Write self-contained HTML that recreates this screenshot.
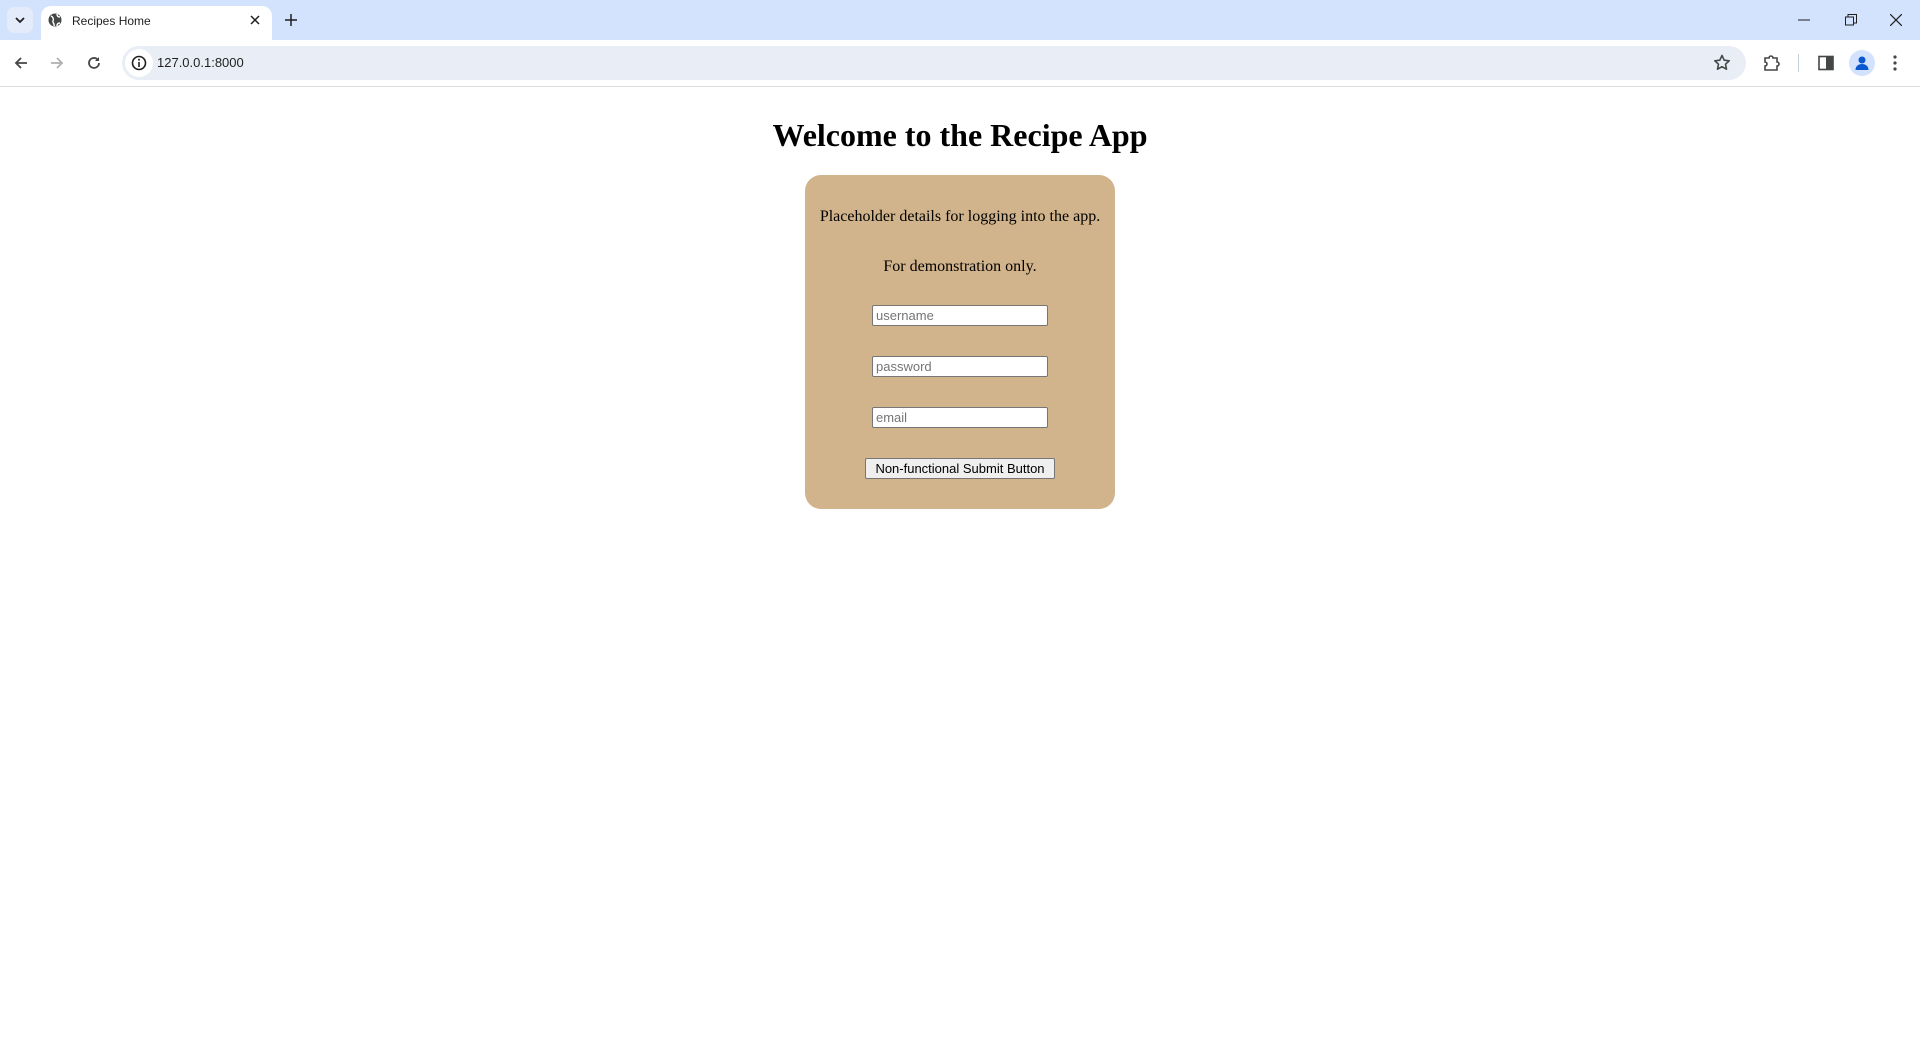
<!DOCTYPE html>
<html><head><meta charset="utf-8"><style>
*{box-sizing:border-box;margin:0;padding:0}
body{width:1920px;height:1040px;background:#fff;position:relative;overflow:hidden;font-family:"Liberation Sans",sans-serif}
.abs{position:absolute}
#tabbar{left:0;top:0;width:1920px;height:40px;background:#d3e3fd}
#tab{left:41px;top:6px;width:231px;height:34px;background:#fff;border-radius:10px 10px 0 0}
#toolbar{left:0;top:40px;width:1920px;height:46px;background:#fff;border-radius:0}
#omni{left:122px;top:46px;width:1624px;height:34px;background:#e9eef6;border-radius:17px}
#sep{left:0;top:86px;width:1920px;height:1px;background:#dadce0}
.txt{font-size:12px;color:#1f1f1f}
h1{position:absolute;left:0;width:1920px;top:117px;text-align:center;font:bold 32px "Liberation Serif",serif;color:#000}
#card{left:805px;top:175px;width:310px;height:334px;background:#d2b48c;border-radius:16px}
.p{position:absolute;left:805px;width:310px;text-align:center;font:16px "Liberation Serif",serif;color:#000}
.in{position:absolute;left:872px;width:176px;height:21px;background:#fff;border:1px solid #767676;border-radius:2px;font:13px "Liberation Sans",sans-serif;color:#757575;padding:2px 3px;line-height:15px}
#btn{left:865px;top:458px;width:190px;height:21px;background:#efefef;border:1px solid #767676;border-radius:2px;font:13px "Liberation Sans",sans-serif;color:#000;text-align:center;line-height:19px}
</style></head><body>
<div id="tabbar" class="abs"></div>
<div class="abs" style="left:7px;top:7px;width:26px;height:26px;border-radius:7px;background:#e4ecfb"></div>
<svg class="abs" style="left:13px;top:13px" width="14" height="14"><path d="M3 5l4 4 4-4" stroke="#1f1f1f" stroke-width="1.8" fill="none"/></svg>
<div id="tab" class="abs"></div>
<svg class="abs" style="left:48px;top:13px" width="14" height="14"><circle cx="7" cy="7" r="6.5" fill="#444746"/><path d="M3 3c2 1 3 3 2 5s2 2 1 5M9 1c0 2 1 3 3 3M12 10c-2 0-3 1-3 3" stroke="#fff" stroke-width="1.4" fill="none"/></svg>
<div class="abs txt" style="left:72px;top:14px">Recipes Home</div>
<svg class="abs" style="left:250px;top:15px" width="10" height="10"><path d="M1 1l8 8M9 1l-8 8" stroke="#1f1f1f" stroke-width="1.5"/></svg>
<svg class="abs" style="left:285px;top:14px" width="12" height="12"><path d="M6 0v12M0 6h12" stroke="#1f1f1f" stroke-width="1.5"/></svg>
<svg class="abs" style="left:1798px;top:19px" width="12" height="2"><path d="M0 1h12" stroke="#1f1f1f"/></svg>
<svg class="abs" style="left:1845px;top:14px" width="12" height="12"><rect x="0.5" y="3" width="8" height="8" fill="none" stroke="#1f1f1f"/><path d="M3 3V0.5h8.5V9H9" fill="none" stroke="#1f1f1f"/></svg>
<svg class="abs" style="left:1890px;top:14px" width="12" height="12"><path d="M0 0l12 12M12 0L0 12" stroke="#1f1f1f" stroke-width="1.2"/></svg>
<div id="toolbar" class="abs"></div>
<svg class="abs" style="left:14px;top:56px" width="14" height="14"><path d="M13 7H2M7 2L2 7l5 5" stroke="#444746" stroke-width="1.8" fill="none"/></svg>
<svg class="abs" style="left:50px;top:56px" width="14" height="14"><path d="M1 7h11M7 2l5 5-5 5" stroke="#b0b0b0" stroke-width="1.8" fill="none"/></svg>
<svg class="abs" style="left:87px;top:56px" width="14" height="14"><path d="M12 7a5 5 0 1 1-1.6-3.7" stroke="#444746" stroke-width="1.8" fill="none"/><path d="M12 1v4H8z" fill="#444746"/></svg>
<div id="omni" class="abs"></div>
<div class="abs" style="left:125px;top:49px;width:28px;height:28px;border-radius:14px;background:#fff"></div>
<svg class="abs" style="left:131px;top:55px" width="16" height="16"><circle cx="8" cy="8" r="6.5" fill="none" stroke="#1f1f1f" stroke-width="1.6"/><path d="M8 7v5" stroke="#1f1f1f" stroke-width="1.6"/><circle cx="8" cy="4.8" r="1" fill="#1f1f1f"/></svg>
<div class="abs" style="left:157px;top:55px;font-size:13px;color:#1f1f1f">127.0.0.1:8000</div>
<svg class="abs" style="left:1713px;top:54px" width="18" height="18"><path d="M9 1.5l2.2 4.7 5 .6-3.7 3.4 1 5L9 12.7 4.5 15.2l1-5L1.8 6.8l5-.6z" fill="none" stroke="#444746" stroke-width="1.6" stroke-linejoin="round"/></svg>
<svg class="abs" style="left:1763px;top:54px" width="18" height="18"><path d="M2 4h4a2 2 0 0 1 4 0h4v4a2 2 0 0 1 0 4v4H2v-4a2 2 0 0 0 0-4z" fill="none" stroke="#444746" stroke-width="1.6"/></svg>
<div class="abs" style="left:1798px;top:54px;width:1px;height:18px;background:#c4d0e0"></div>
<svg class="abs" style="left:1818px;top:55px" width="16" height="16"><rect x="1" y="1.5" width="14" height="13" fill="none" stroke="#444746" stroke-width="1.6"/><rect x="8" y="1.5" width="7" height="13" fill="#444746"/></svg>
<div class="abs" style="left:1849px;top:50px;width:26px;height:26px;border-radius:13px;background:#d3e3fd"></div>
<svg class="abs" style="left:1853px;top:54px" width="18" height="18"><circle cx="9" cy="6" r="3.5" fill="#0b57d0"/><path d="M2.5 16c0-4 3-6 6.5-6s6.5 2 6.5 6z" fill="#0b57d0"/></svg>
<svg class="abs" style="left:1893px;top:54px" width="4" height="18"><circle cx="2" cy="3" r="1.6" fill="#444746"/><circle cx="2" cy="9" r="1.6" fill="#444746"/><circle cx="2" cy="15" r="1.6" fill="#444746"/></svg>
<div id="sep" class="abs"></div>

<h1>Welcome to the Recipe App</h1>
<div id="card" class="abs"></div>
<div class="p" style="top:208px">Placeholder details for logging into the app.</div>
<div class="p" style="top:258px">For demonstration only.</div>
<div class="in" style="top:305px">username</div>
<div class="in" style="top:356px">password</div>
<div class="in" style="top:407px">email</div>
<div id="btn" class="abs">Non-functional Submit Button</div>
</body></html>
